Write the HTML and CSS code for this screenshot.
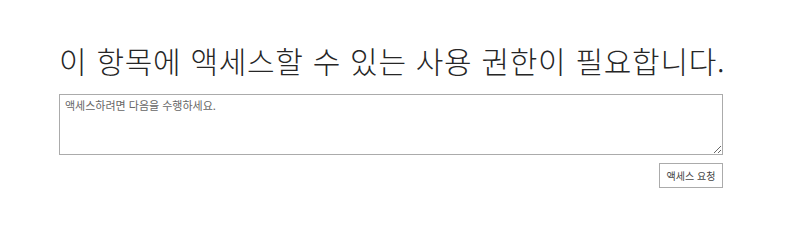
FILE: index.html
```html
<!DOCTYPE html>
<html lang="ko">

<head>
    <meta charset="UTF-8">
    <meta name="viewport" content="width=device-width, initial-scale=1.0">
    <title>액세스 요청</title>

    <link rel="stylesheet" href="styles.css">
</head>

<body>
    <div class="access_page">
        <h1 class="access-title">이 항목에 액세스할 수 있는 사용 권한이 필요합니다.</h1>
        <textarea class="access-message" placeholder="액세스하려면 다음을 수행하세요."></textarea>
        <div class="access-actions">
            <button class="request-btn" type="button">액세스 요청</button>
        </div>
    </div>
</body>

</html>
```

FILE: styles.css
```css
html,
body,
h1,
div {
    margin: 0;
    padding: 0;
    border: 0;
}

body {
    background-color: white;
    font-family: "Noto Sans CJK KR", "Noto Sans", sans-serif;
    color: #333333;
}

.access_page {
    width: 664px;
    padding: 40px 0 0 59px;
    display: flex;
    flex-direction: column;
}

.access-title {
    font-size: 30px;
    font-weight: 300;
    line-height: 40px;
    letter-spacing: 0.7px;
    color: #262626;
    white-space: nowrap;
    margin-bottom: 14px;
}

.access-message {
    box-sizing: border-box;
    width: 664px;
    height: 61px;
    border: 1px solid #ababab;
    padding: 2px 5px;
    font-family: "Noto Sans CJK KR", sans-serif;
    font-size: 11px;
    color: #444444;
    resize: vertical;
    outline: none;
}

.access-message::placeholder {
    color: #666666;
}

.access-actions {
    display: flex;
    justify-content: flex-end;
    margin-top: 8px;
}

.request-btn {
    box-sizing: border-box;
    height: 25px;
    width: 64px;
    padding: 0;
    border: 1px solid #ababab;
    background-color: white;
    font-family: "Noto Sans CJK KR", sans-serif;
    font-size: 10px;
    color: #444444;
}
```
